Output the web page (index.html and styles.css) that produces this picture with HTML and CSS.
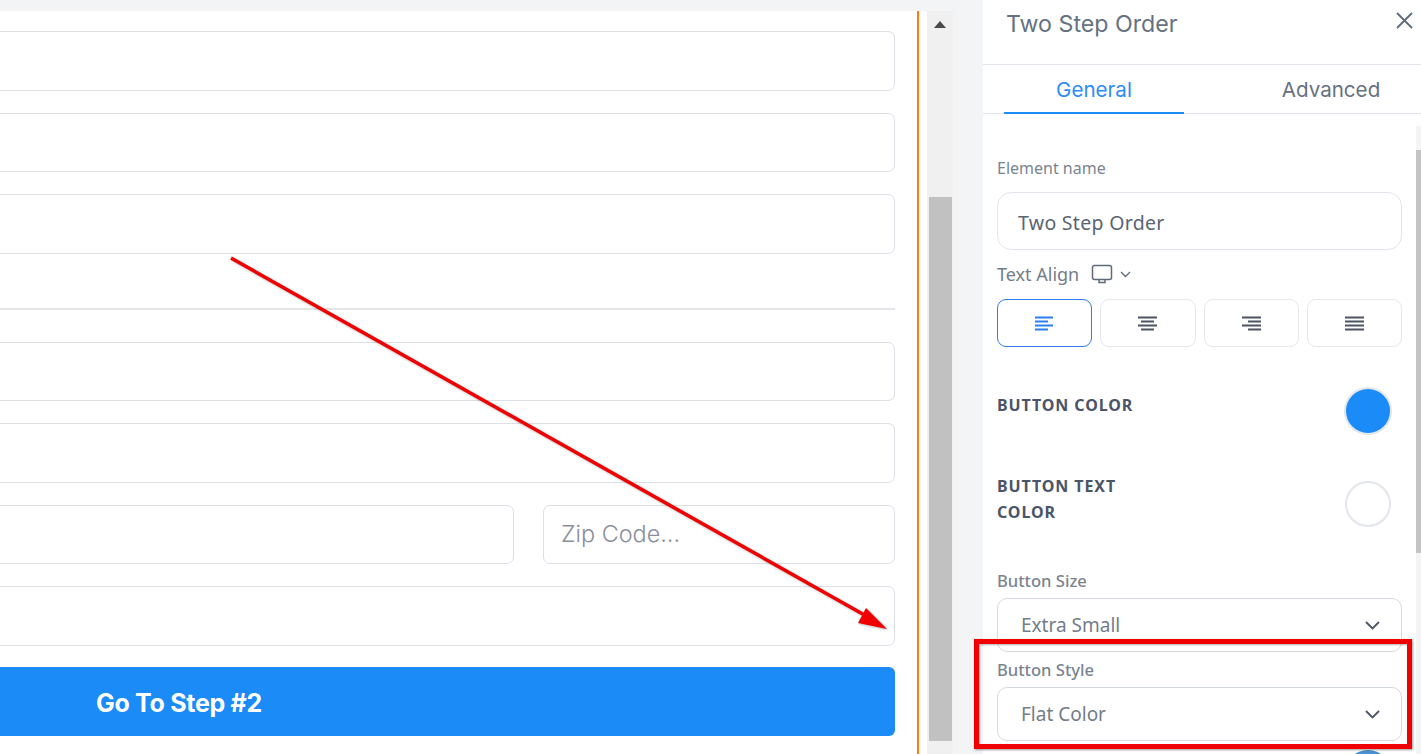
FILE: index.html
```html
<!DOCTYPE html>
<html lang="en">
<head>
  <meta charset="UTF-8" />
  <meta name="viewport" content="width=device-width, initial-scale=1.0"/>
  <title>Two Step Order</title>
  <link rel="stylesheet" href="styles.css">
</head>
<body>
  <div class="editor">
    <div class="canvas">
      <div class="form">
        <input class="field" type="text">
        <input class="field" type="text">
        <input class="field" type="text">
        <hr class="divider">
        <input class="field" type="text">
        <input class="field" type="text">
        <div class="field-row">
          <input class="field city" type="text">
          <input class="field zip" type="text" placeholder="Zip Code...">
        </div>
        <input class="field" type="text">
        <button class="step-btn"><span>Go To Step #2</span></button>
      </div>
    </div>
    <div class="scrollbar">
      <div class="scroll-up"></div>
      <div class="scroll-thumb"></div>
    </div>
  </div>

  <aside class="panel">
    <div class="panel-head">
      <h2>Two Step Order</h2>
      <svg class="close" width="19" height="19" viewBox="0 0 19 19"><path d="M2 2l15 15M17 2L2 17" stroke="#5f6b7a" stroke-width="1.8" fill="none"/></svg>
    </div>
    <div class="tabs">
      <div class="tab active">General</div>
      <div class="tab">Advanced</div>
    </div>
    <div class="panel-body">
      <label class="label name-label">Element name</label>
      <input class="name-input" type="text" value="Two Step Order">

      <div class="align-label">
        <span>Text Align</span>
        <svg width="22" height="20" viewBox="0 0 22 20"><path d="M3.5 1.5h15a2 2 0 0 1 2 2v10a2 2 0 0 1-2 2h-15a2 2 0 0 1-2-2v-10a2 2 0 0 1 2-2zM8 15.500v3h6v-3" stroke="#5f6b7a" stroke-width="1.5" fill="none"/></svg>
        <svg width="11" height="7" viewBox="0 0 11 7"><path d="M1 1l4.500 4.500L10 1" stroke="#5f6b7a" stroke-width="1.300" fill="none"/></svg>
      </div>
      <div class="align-btns">
        <div class="align-btn active">
          <svg width="19" height="15" viewBox="0 0 19 15"><path d="M0 1.500h18M0 5.500h13M0 9.500h18M0 13.500h13" stroke="#2d7ff0" stroke-width="2.100"/></svg>
        </div>
        <div class="align-btn">
          <svg width="19" height="15" viewBox="0 0 19 15"><path d="M0 1.500h19M3 5.500h13M0 9.500h19M3 13.500h13" stroke="#4b5563" stroke-width="2.100"/></svg>
        </div>
        <div class="align-btn">
          <svg width="19" height="15" viewBox="0 0 19 15"><path d="M0 1.500h19M6 5.500h13M0 9.500h19M6 13.500h13" stroke="#4b5563" stroke-width="2.100"/></svg>
        </div>
        <div class="align-btn">
          <svg width="19" height="15" viewBox="0 0 19 15"><path d="M0 1.500h19M0 5.500h19M0 9.500h19M0 13.500h19" stroke="#4b5563" stroke-width="2.100"/></svg>
        </div>
      </div>

      <div class="color-row first">
        <div class="color-name">BUTTON COLOR</div>
        <div class="swatch blue"></div>
      </div>
      <div class="color-row second">
        <div class="color-name">BUTTON TEXT<br>COLOR</div>
        <div class="swatch white"></div>
      </div>

      <label class="label field-label size-label">Button Size</label>
      <div class="select">
        <span>Extra Small</span>
        <svg width="15" height="9" viewBox="0 0 15 9"><path d="M1 1l6.500 6.500L14 1" stroke="#4b5563" stroke-width="1.800" fill="none"/></svg>
      </div>
      <label class="label field-label style-label">Button Style</label>
      <div class="select">
        <span>Flat Color</span>
        <svg width="15" height="9" viewBox="0 0 15 9"><path d="M1 1l6.500 6.500L14 1" stroke="#4b5563" stroke-width="1.800" fill="none"/></svg>
      </div>
      <div class="next-swatch"></div>
    </div>
    <div class="panel-scroll"><div class="panel-thumb"></div></div>
  </aside>

  <!-- annotations on top of the screenshot -->
  <svg class="arrow" width="1421" height="754" viewBox="0 0 1421 754">
    <path d="M231 258L868 617" stroke="#f00000" stroke-width="3.5" fill="none"/>
    <path d="M887 629L858 623L866 608z" fill="#f00000"/>
  </svg>
  <div class="highlight"></div>
</body>
</html>
```

FILE: styles.css
```css
html, body { height: 100%; }
body {
  margin: 0;
  width: 1421px;
  height: 754px;
  overflow: hidden;
  background: #f3f4f6;
  display: flex;
  font-family: "Inter", sans-serif;
}

/* left side */
.editor {
  width: 953px;
  flex: none;
  display: flex;
  padding-top: 11px;
  box-sizing: border-box;
  height: 754px;
}
.canvas {
  width: 927px;
  background: #fff;
  padding-right: 8px;
  box-sizing: border-box;
  overflow: hidden;
}
.form {
  height: 100%;
  box-sizing: border-box;
  margin-left: -30px;
  padding: 20px 22px 0 0;
  border-right: 2px solid #ff7a10;
  display: flex;
  flex-direction: column;
  gap: 22px;
}
.field {
  display: block;
  width: 100%;
  height: 59.5px;
  flex: none;
  box-sizing: border-box;
  border: 1px solid #dcdfe6;
  border-radius: 7px;
  background: #fff;
  padding: 0 17px;
  font-family: "Inter", sans-serif;
  font-size: 23.4px;
  font-weight: 300;
}
.field::placeholder { color: #8a8f9c; opacity: 1; }
.field-row { display: flex; gap: 29px; flex: none; }
.city { flex: 1; }
.zip { width: 352px; flex: none; padding-bottom: 2px; }
.divider {
  width: 100%;
  border: none;
  border-top: 2px solid #e3e5e9;
  margin: 32px 0 10px;
}
.step-btn {
  flex: none;
  height: 69px;
  margin-top: -1px;
  border: none;
  border-radius: 6px;
  background: #1a8bf7;
  color: #fff;
  font-family: "Inter", sans-serif;
  font-size: 25px;
  font-weight: 700;
  text-align: left;
  padding: 3px 0 0 126px;
  letter-spacing: -0.3px;
}
.scrollbar {
  width: 26px;
  background: #f0f0f0;
}
.scroll-up {
  width: 0;
  height: 0;
  margin: 10px auto 0;
  border-left: 6px solid transparent;
  border-right: 6px solid transparent;
  border-bottom: 7px solid #4a4a4a;
}
.scroll-thumb {
  margin: 169px 1px 0 2px;
  height: 544px;
  background: #c1c1c1;
}

/* right side */
.panel {
  position: relative;
  margin-left: 30px;
  width: 438px;
  flex: none;
  height: 754px;
  background: #fff;
  overflow: hidden;
}
.panel-head {
  border-bottom: 1px solid #e2e6ec;
  display: flex;
  justify-content: space-between;
  padding: 11px 7px 0 23px;
  height: 53px;
}
.panel-head h2 {
  margin: 0;
  font-size: 23.2px;
  line-height: 26px;
  font-weight: 400;
  color: #66727f;
}
.tabs {
  display: flex;
  justify-content: space-between;
  padding-left: 21px;
  border-bottom: 1px solid #e2e6ec;
}
.tab {
  width: 180px;
  height: 48px;
  line-height: 50px;
  text-align: center;
  font-size: 20.6px;
  color: #66727f;
  box-sizing: border-box;
}
.tab.active {
  color: #2d8cf5;
  border-bottom: 2px solid #1a8bf7;
  margin-bottom: -1px;
  height: 49px;
}
.panel-body {
  padding: 0 19px 0 14px;
  font-family: "Noto Sans", sans-serif;
}
.label {
  display: block;
  font-size: 16px;
  line-height: 20px;
  color: #7a8491;
}
.field-label { font-size: 16.6px; font-weight: 500; }
.name-label { padding-top: 44px; }
.name-input {
  display: block;
  width: 100%;
  height: 58px;
  margin-top: 14px;
  box-sizing: border-box;
  border: 1px solid #e2e6ec;
  border-radius: 14px;
  padding: 3px 20px 0;
  font-family: "Noto Sans", sans-serif;
  font-size: 19.5px;
  color: #5a6472;
  letter-spacing: 0.3px;
}
.align-label {
  display: flex;
  align-items: center;
  height: 24px;
  margin-top: 12px;
  font-size: 18px;
  color: #737d8a;
}
.align-label svg:first-of-type { margin: 0 7px 0 12px; }
.align-btns {
  display: grid;
  grid-template-columns: repeat(4, 1fr);
  gap: 8px;
  margin-top: 13px;
}
.align-btn {
  height: 48px;
  box-sizing: border-box;
  border: 1px solid #e6e8ec;
  border-radius: 9px;
  display: flex;
  align-items: center;
  justify-content: center;
}
.align-btn.active { border: 1.5px solid #2d7ff0; }
.color-row {
  display: flex;
  justify-content: space-between;
  padding-right: 12px;
}
.color-row.first { margin-top: 42px; }
.color-row.first .color-name { padding-top: 3px; }
.color-row.second { margin-top: 40px; }
.color-name {
  font-size: 16px;
  line-height: 26px;
  font-weight: 700;
  letter-spacing: 0.9px;
  color: #4b5568;
}
.swatch {
  width: 44px;
  height: 44px;
  box-sizing: border-box;
  border-radius: 50%;
}
.swatch.blue {
  background: #1a8bf7;
  box-shadow: 0 0 0 2px #e2e6ec;
}
.swatch.white {
  border: 2px solid #e2e6ec;
  background: #fff;
  width: 46px;
  height: 46px;
  margin: 8px -1px 0 0;
}
.size-label { margin-top: 44px; }
.select {
  height: 54px;
  margin-top: 7px;
  box-sizing: border-box;
  border: 1px solid #d5d9e0;
  border-radius: 10px;
  padding: 0 21px 0 23px;
  display: flex;
  justify-content: space-between;
  align-items: center;
  font-size: 19px;
  color: #737d8a;
}
.style-label { margin-top: 8px; }
.next-swatch {
  width: 46px;
  height: 46px;
  margin: 9px 11px 0 auto;
  border-radius: 50%;
  background: #4a90d0;
}
.panel-scroll {
  position: absolute;
  top: 126px;
  right: 0;
  width: 5px;
  height: 628px;
  background: #f4f4f5;
}
.panel-thumb {
  margin-top: 24px;
  height: 403px;
  background: #c4c4c4;
}

/* annotations */
.arrow {
  position: absolute;
  left: 0;
  top: 0;
  pointer-events: none;
  filter: drop-shadow(1px 1px 1px rgba(0,0,0,0.3));
}
.highlight {
  position: absolute;
  left: 974px;
  top: 639px;
  width: 438px;
  height: 110px;
  box-sizing: border-box;
  border: 5px solid #f00000;
  box-shadow: 1px 1px 2px rgba(0,0,0,0.4), inset 1px 1px 2px rgba(0,0,0,0.3);
}
```
